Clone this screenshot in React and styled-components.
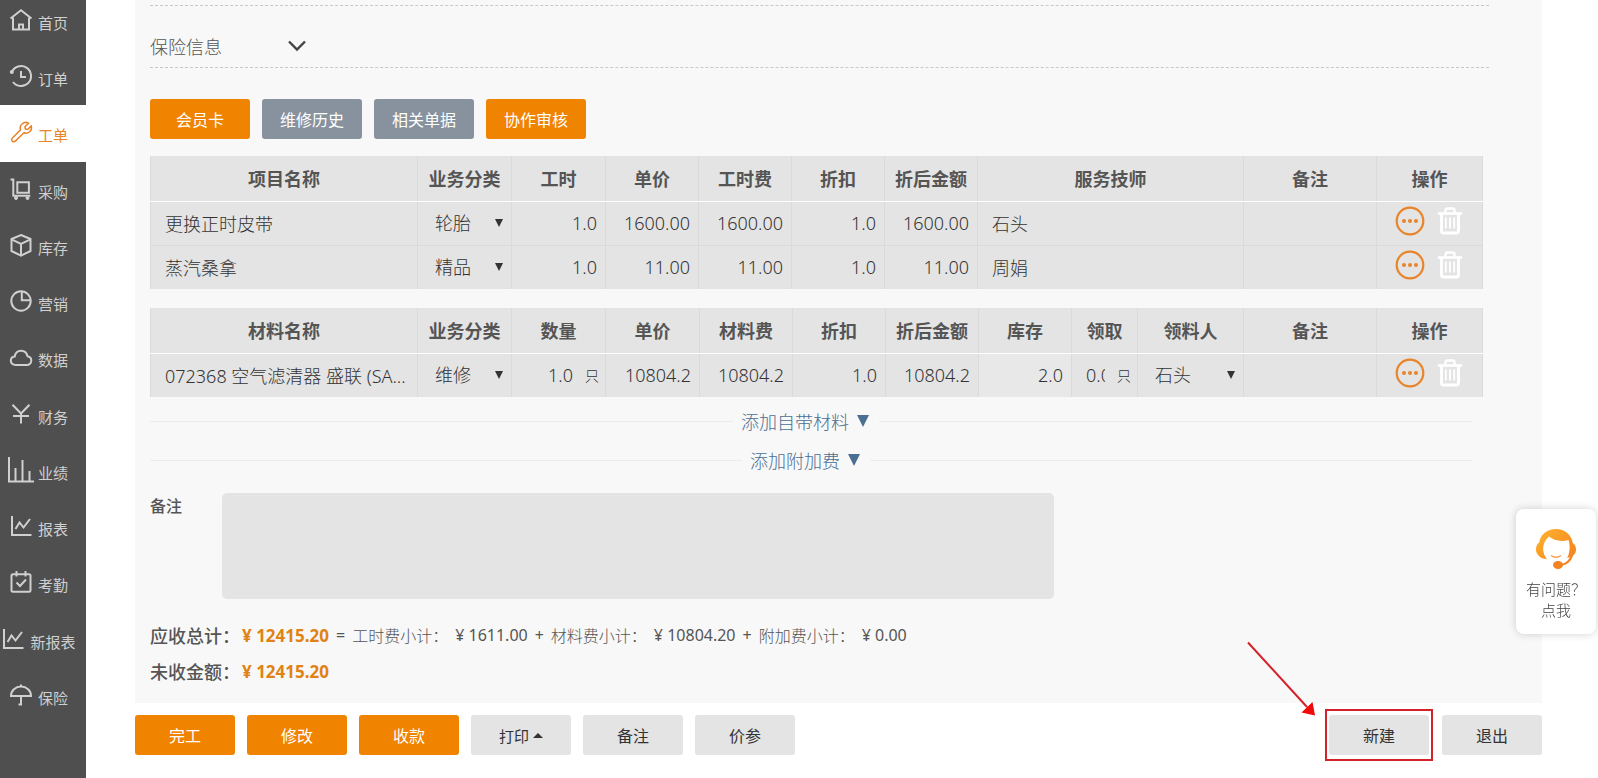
import React from 'react';
import styled, { createGlobalStyle } from 'styled-components';

const fontStack = '"Noto Sans", "Noto Sans CJK SC", sans-serif';

const navItems = [
  { label: '首页', icon: 'home' },
  { label: '订单', icon: 'history' },
  { label: '工单', icon: 'wrench', active: true },
  { label: '采购', icon: 'cart' },
  { label: '库存', icon: 'box' },
  { label: '营销', icon: 'pie' },
  { label: '数据', icon: 'cloud' },
  { label: '财务', icon: 'yen' },
  { label: '业绩', icon: 'bars' },
  { label: '报表', icon: 'trend' },
  { label: '考勤', icon: 'calendar' },
  { label: '新报表', icon: 'trend' },
  { label: '保险', icon: 'umbrella' },
];

const categories = ['轮胎', '精品', '维修'];

const projects = [
  { name: '更换正时皮带', category: '轮胎', hours: '1.0', price: '1600.00', fee: '1600.00', discount: '1.0', total: '1600.00', staff: '石头' },
  { name: '蒸汽桑拿', category: '精品', hours: '1.0', price: '11.00', fee: '11.00', discount: '1.0', total: '11.00', staff: '周娟' },
];

const materials = [
  {
    name: '072368 空气滤清器 盛联 (SA...',
    category: '维修',
    count: '1.0',
    unit: '只',
    price: '10804.2',
    fee: '10804.2',
    discount: '1.0',
    total: '10804.2',
    stock: '2.0',
    taken: '0.0',
    receiver: '石头',
  },
];

const subtotals = [
  { sign: '=', label: '工时费小计：', amount: '¥ 1611.00' },
  { sign: '+', label: '材料费小计：', amount: '¥ 10804.20' },
  { sign: '+', label: '附加费小计：', amount: '¥ 0.00' },
];

const navIcons = {
  home: (
    <>
      <path d="M0.5 9.5 11 1.2l10.5 8.3" />
      <path d="M3 8.5v12h16v-12" />
      <path d="M9 20.5v-5h4v5" />
    </>
  ),
  history: (
    <>
      <path d="M1.8 7.2A10 10 0 1 1 3 17" />
      <circle cx="1.8" cy="7" r="1" fill="currentColor" />
      <path d="M11 6v6h5" />
    </>
  ),
  wrench: (
    <path
      d="M18.6 2.2l-3.7 3.6.5 2.2 2.3.5 3.5-3.6a5.6 5.6 0 0 1-7.4 6.9L5.3 20.1a2.1 2.1 0 0 1-3.3-.3 2.1 2.1 0 0 1 .2-2.6l8.3-8.4a5.6 5.6 0 0 1 8.1-6.6z"
      strokeWidth="1.5"
    />
  ),
  cart: (
    <>
      <path d="M0.5 1.5h2.8v16.3h17" />
      <path d="M7.3 4.2h11.6v10.6H7.3z" />
      <circle cx="6" cy="20" r="1.5" fill="currentColor" strokeWidth="1" />
      <circle cx="17.5" cy="20" r="1.5" fill="currentColor" strokeWidth="1" />
    </>
  ),
  box: (
    <>
      <path d="M11 1l9.5 4v12L11 21.6 1.5 17V5z" />
      <path d="M1.5 5.3 11 9.8l9.5-4.5M11 9.8v11.5" />
    </>
  ),
  pie: (
    <>
      <circle cx="11" cy="11" r="9.7" />
      <path d="M11.8 1.5v8.8h8.7" />
    </>
  ),
  cloud: (
    <path d="M5.5 19C2.8 19 .8 17.2.8 14.8c0-2.3 1.7-3.9 3.9-4.2C5.3 7.2 7.800 4.700 11 4.700s5.800 2.200 6.500 5.500c2.200.4 3.800 2.100 3.800 4.400 0 2.500-2 4.400-4.600 4.400z" />
  ),
  yen: <path d="M2.5 1.8 11 10.5l8.500-8.700M3 13h16M11 10.500v10" />,
  bars: <path d="M-1-2v24.500h25M5.500 22V9M12.500 22V1M19.500 22V12" />,
  trend: <path d="M2 1v19h19.500M5.500 14l4-6.500 4 5L20 4" />,
  calendar: (
    <>
      <rect x="1.5" y="3.2" width="19" height="17.5" rx="1.5" />
      <path d="M6.5 0v5.500M15.500 0v5.500M6.500 11.500l3.500 3.500 6-6.500" />
    </>
  ),
  umbrella: (
    <>
      <path d="M1 12C1 6.500 5.500 2.600 11 2.600S21 6.500 21 12z" />
      <path d="M11 .5v2M11 12v8.500H8.500" />
    </>
  ),
};

function SelectBox({ label, value, options }) {
  return (
    <SelectWrapper>
      <Select aria-label={label} defaultValue={value}>
        {options.map((option) => (
          <option key={option}>{option}</option>
        ))}
      </Select>
      <SelectArrow />
    </SelectWrapper>
  );
}

function RowActions() {
  return (
    <Actions>
      <IconButton type="button" aria-label="更多">
        <svg width="30" height="30" viewBox="0 0 30 30" fill="#e8842a">
          <circle cx="15" cy="15" r="13.3" fill="none" stroke="#e8842a" strokeWidth="2.2" />
          <circle cx="9" cy="15" r="2" />
          <circle cx="15" cy="15" r="2" />
          <circle cx="21" cy="15" r="2" />
        </svg>
      </IconButton>
      <IconButton type="button" aria-label="删除">
        <svg width="24" height="28" viewBox="0 0 24 28" fill="none" stroke="#fff" strokeWidth="1.8">
          <path d="M0 6.5h24" strokeWidth="2.6" />
          <path d="M7.5 5.5v-2q0-2 2-2h5q2 0 2 2v2" strokeWidth="2.4" />
          <path d="M3.500 7v17q0 2 2 2h13q2 0 2-2V7" strokeWidth="2.8" />
          <path d="M7.800 10.500v11M12 10.500v11M16.200 10.500v11" />
        </svg>
      </IconButton>
    </Actions>
  );
}

function Sidebar() {
  return (
    <Nav>
      {navItems.map(({ label, icon, active }) => (
        <NavItem key={label} href="#" $active={active}>
          <NavIcon viewBox="0 0 22 22" aria-hidden="true">
            {navIcons[icon]}
          </NavIcon>
          <NavLabel>{label}</NavLabel>
        </NavItem>
      ))}
    </Nav>
  );
}

function ProjectTable() {
  return (
    <Table>
      <colgroup>
        <Col />
        <Col $width={94} />
        <Col $width={94} />
        <Col $width={93} />
        <Col $width={93} />
        <Col $width={93} />
        <Col $width={93} />
        <Col $width={266} />
        <Col $width={133} />
        <Col $width={106} />
      </colgroup>
      <thead>
        <tr>
          {['项目名称', '业务分类', '工时', '单价', '工时费', '折扣', '折后金额', '服务技师', '备注', '操作'].map((title) => (
            <HeadCell key={title}>{title}</HeadCell>
          ))}
        </tr>
      </thead>
      <tbody>
        {projects.map((row) => (
          <tr key={row.name}>
            <Cell>{row.name}</Cell>
            <Cell $flush>
              <SelectBox label="业务分类" value={row.category} options={categories} />
            </Cell>
            <Cell $number>{row.hours}</Cell>
            <Cell $number>{row.price}</Cell>
            <Cell $number>{row.fee}</Cell>
            <Cell $number>{row.discount}</Cell>
            <Cell $number>{row.total}</Cell>
            <Cell>{row.staff}</Cell>
            <Cell />
            <Cell $flush>
              <RowActions />
            </Cell>
          </tr>
        ))}
      </tbody>
    </Table>
  );
}

function MaterialTable() {
  return (
    <Table>
      <colgroup>
        <Col />
        <Col $width={94} />
        <Col $width={94} />
        <Col $width={94} />
        <Col $width={93} />
        <Col $width={93} />
        <Col $width={93} />
        <Col $width={93} />
        <Col $width={66} />
        <Col $width={106} />
        <Col $width={133} />
        <Col $width={106} />
      </colgroup>
      <thead>
        <tr>
          {['材料名称', '业务分类', '数量', '单价', '材料费', '折扣', '折后金额', '库存', '领取', '领料人', '备注', '操作'].map((title) => (
            <HeadCell key={title}>{title}</HeadCell>
          ))}
        </tr>
      </thead>
      <tbody>
        {materials.map((row) => (
          <tr key={row.name}>
            <Cell>{row.name}</Cell>
            <Cell $flush>
              <SelectBox label="业务分类" value={row.category} options={categories} />
            </Cell>
            <Cell $flush>
              <Quantity>
                <QuantityInput aria-label="数量" defaultValue={row.count} $alignRight />
                <Unit>{row.unit}</Unit>
              </Quantity>
            </Cell>
            <Cell $number>{row.price}</Cell>
            <Cell $number>{row.fee}</Cell>
            <Cell $number>{row.discount}</Cell>
            <Cell $number>{row.total}</Cell>
            <Cell $number $readOnly>{row.stock}</Cell>
            <Cell $flush>
              <Quantity>
                <QuantityInput aria-label="领取" defaultValue={row.taken} />
                <Unit>{row.unit}</Unit>
              </Quantity>
            </Cell>
            <Cell $flush>
              <SelectBox label="领料人" value={row.receiver} options={['石头', '周娟']} />
            </Cell>
            <Cell />
            <Cell $flush>
              <RowActions />
            </Cell>
          </tr>
        ))}
      </tbody>
    </Table>
  );
}

function App() {
  return (
    <>
      <GlobalStyle />
      <Page>
        <Sidebar />
        <Main>
          <Panel>
            <SectionToggle type="button">
              保险信息
              <svg width="18" height="12" viewBox="0 0 18 12" fill="none" stroke="#444" strokeWidth="2.4">
                <path d="M1 1.5l8 8 8-8" />
              </svg>
            </SectionToggle>
            <Toolbar>
              <Button type="button" $variant="primary">会员卡</Button>
              <Button type="button" $variant="slate">维修历史</Button>
              <Button type="button" $variant="slate">相关单据</Button>
              <Button type="button" $variant="primary">协作审核</Button>
            </Toolbar>
            <Tables>
              <ProjectTable />
              <MaterialTable />
            </Tables>
            <AddLinks>
              <AddLine>
                <AddButton type="button">
                  添加自带材料
                  <AddArrow />
                </AddButton>
              </AddLine>
              <AddLine>
                <AddButton type="button">
                  添加附加费
                  <AddArrow />
                </AddButton>
              </AddLine>
            </AddLinks>
            <Remark>
              <RemarkLabel htmlFor="remark">备注</RemarkLabel>
              <RemarkInput id="remark" />
            </Remark>
            <Summary>
              <SummaryRow>
                <SummaryLabel>应收总计：</SummaryLabel>
                <Amount>¥ 12415.20</Amount>
                {subtotals.map(({ sign, label, amount }) => (
                  <React.Fragment key={label}>
                    <span>{sign}</span>
                    <SubtotalLabel>{label}</SubtotalLabel>
                    <span>{amount}</span>
                  </React.Fragment>
                ))}
              </SummaryRow>
              <SummaryRow>
                <SummaryLabel>未收金额：</SummaryLabel>
                <Amount>¥ 12415.20</Amount>
              </SummaryRow>
            </Summary>
          </Panel>
          <Footer>
            <Button type="button" $variant="primary">完工</Button>
            <Button type="button" $variant="primary">修改</Button>
            <Button type="button" $variant="primary">收款</Button>
            <Button type="button" $small>
              打印
              <UpArrow />
            </Button>
            <Button type="button">备注</Button>
            <Button type="button">价参</Button>
            <Highlight>
              <Button type="button">新建</Button>
              <Pointer viewBox="0 0 70 76" aria-hidden="true">
                <path d="M1 1.5 60 66" stroke="#d3222a" strokeWidth="2" />
                <path d="M68 74.5 54.500 71.500 65.500 61z" fill="#f00a0a" />
              </Pointer>
            </Highlight>
            <Button type="button">退出</Button>
          </Footer>
        </Main>
        <HelpCard href="#">
          <svg width="40" height="40" viewBox="0 0 40 40" aria-hidden="true">
            <defs>
              <linearGradient id="hair" x1="0" y1="0" x2="1" y2="1">
                <stop offset="0" stopColor="#ffb52e" />
                <stop offset="1" stopColor="#f47a1c" />
              </linearGradient>
            </defs>
            <path
              fill="url(#hair)"
              d="M20 0C11 0 4.500 5.500 3.200 13.500 1 15 0 17.500 0 20.500c0 4.500 3.500 8 8 9.200l3 .6C7.800 26.500 6.200 20.500 7.700 15.500c.8-2.800 2.400-5.500 5.300-8 4.500 4 12.500 5.500 19.500 3.500 2 6.500 1.300 13-1.300 18l2.800-1c-2 4-5 6.500-8.800 7v1.500C31 36.500 35.500 32 37 26.500c2-1.500 3-3.500 3-6 0-2.800-1.200-5.200-3.200-6.500C35.500 6 29 0 20 0z"
            />
            <path d="M15 26.500q5 3.600 10 0" fill="none" stroke="#f79a4a" strokeWidth="1.5" />
            <ellipse cx="22" cy="36" rx="5" ry="4" fill="#f58220" />
          </svg>
          <span>有问题？</span>
          <span>点我</span>
        </HelpCard>
      </Page>
    </>
  );
}

const GlobalStyle = createGlobalStyle`
  * {
    box-sizing: border-box;
  }

  body {
    margin: 0;
    background: #fff;
    color: #555;
    font-family: ${fontStack};
    font-size: 16px;
    font-weight: 300;
  }

  button, input, select, textarea {
    font-family: inherit;
    font-weight: inherit;
  }
`;

const Page = styled.div`
  display: flex;
  min-height: 100vh;
  overflow: hidden;
`;

const Nav = styled.nav`
  flex: none;
  width: 86px;
  margin-top: -7px;
  background: #4f4f4f;
`;

const NavItem = styled.a`
  display: flex;
  justify-content: center;
  align-items: flex-start;
  gap: 6px;
  height: 56px;
  padding: 16px 8px 0 0;
  background: ${(props) => (props.$active ? '#fff' : 'transparent')};
  color: ${(props) => (props.$active ? '#e8842a' : '#d0d0d0')};
  font-size: 15px;
  font-weight: 400;
  line-height: 24px;
  text-decoration: none;

  &:nth-child(4n + 3) {
    height: 57px;
  }
`;

const NavIcon = styled.svg`
  flex: none;
  width: 22px;
  height: 22px;
  overflow: visible;
  fill: none;
  stroke: currentColor;
  stroke-width: 2;
`;

const NavLabel = styled.span`
  margin-top: 2px;
  white-space: nowrap;
`;

const Main = styled.main`
  flex: 1;
  min-width: 0;
  padding: 0 56px 22px 49px;
`;

const Panel = styled.section`
  padding: 5px 53px 20px 15px;
  background: #f8f8f8;
`;

const SectionToggle = styled.button`
  display: flex;
  align-items: center;
  gap: 66px;
  width: 100%;
  height: 63px;
  padding: 18px 0 0;
  border: dashed #c8c8c8;
  border-width: 1px 0;
  background: none;
  color: #555;
  font-size: 18px;
`;

const Toolbar = styled.div`
  display: flex;
  gap: 12px;
  padding: 31px 0 17px;
`;

const buttonColors = {
  primary: '#f08300',
  slate: '#87929e',
  plain: '#e4e4e4',
};

const Button = styled.button`
  display: flex;
  justify-content: center;
  align-items: center;
  gap: 4px;
  width: 100px;
  height: 40px;
  padding: 0;
  border: none;
  border-radius: 3px;
  background: ${(props) => buttonColors[props.$variant || 'plain']};
  color: ${(props) => (props.$variant ? '#fff' : '#333')};
  font-size: ${(props) => (props.$small ? '15px' : '16px')};
  font-weight: 400;
`;

const Tables = styled.div`
  display: grid;
  gap: 19px;
  padding-right: 6px;
`;

const Table = styled.table`
  width: 100%;
  table-layout: fixed;
  border-collapse: collapse;
  background: #e4e4e4;
  font-size: 18px;
`;

const Col = styled.col`
  width: ${(props) => (props.$width ? `${props.$width}px` : 'auto')};
`;

const HeadCell = styled.th`
  height: 45px;
  padding: 0;
  border: solid #dadada;
  border-width: 0 1px;
  border-bottom: 1px solid #fff;
  font-weight: 700;
`;

const Cell = styled.td`
  height: 44px;
  padding: ${(props) => (props.$flush ? '0' : '0 8px 0 14px')};
  border: 1px solid #dadada;
  border-bottom: 0;
  background: ${(props) => (props.$readOnly ? '#e8e8e8' : 'transparent')};
  color: #333;
  text-align: ${(props) => (props.$number ? 'right' : 'left')};
  white-space: nowrap;
  overflow: hidden;

  tr:first-child > & {
    border-top-color: #fff;
  }
`;

const SelectWrapper = styled.div`
  display: flex;
  align-items: center;
  padding: 0 8px 0 17px;
`;

const Select = styled.select`
  flex: 1;
  min-width: 0;
  padding: 0;
  border: none;
  appearance: none;
  background: none;
  color: #333;
  font-size: 18px;
`;

const SelectArrow = styled.span`
  border: solid transparent;
  border-width: 8px 4px 0;
  border-top-color: #333;
`;

const Quantity = styled.label`
  display: flex;
  align-items: center;
  gap: 12px;
  padding: 0 6px 0 14px;
`;

const QuantityInput = styled.input`
  flex: 1;
  width: 0;
  min-width: 0;
  padding: 0;
  border: none;
  background: none;
  color: #333;
  font-size: 18px;
  text-align: ${(props) => (props.$alignRight ? 'right' : 'left')};
`;

const Unit = styled.span`
  font-size: 14px;
`;

const Actions = styled.div`
  display: flex;
  align-items: center;
  gap: 13px;
  padding: 0 0 4px 18px;
`;

const IconButton = styled.button`
  display: flex;
  padding: 0;
  border: none;
  background: none;
`;

const AddLinks = styled.div`
  display: grid;
  gap: 11px;
  padding: 10px 17px 0 0;
`;

const AddLine = styled.div`
  display: flex;
  align-items: center;

  &::before,
  &::after {
    content: '';
    flex: 1;
    border-top: 1px solid #ebebeb;
  }

  &::after {
    flex-basis: 10px;
  }
`;

const AddButton = styled.button`
  display: flex;
  align-items: center;
  gap: 8px;
  height: 28px;
  padding: 0 10px 0 8px;
  border: none;
  background: none;
  color: #4a6f92;
  font-size: 18px;
`;

const AddArrow = styled.span`
  border: solid transparent;
  border-width: 12px 6px 0;
  border-top-color: #4a6f92;
`;

const Remark = styled.div`
  display: flex;
  padding-top: 19px;
`;

const RemarkLabel = styled.label`
  flex: none;
  width: 72px;
  font-weight: 500;
`;

const RemarkInput = styled.textarea`
  flex: 0 1 832px;
  height: 106px;
  border: none;
  border-radius: 5px;
  background: #e4e4e4;
  resize: none;
`;

const Summary = styled.div`
  display: grid;
  gap: 12px;
  padding-top: 24px;
`;

const SummaryRow = styled.div`
  display: flex;
  align-items: center;
  gap: 7px;
  height: 24px;
  font-weight: 400;
  white-space: nowrap;
`;

const SummaryLabel = styled.span`
  width: 85px;
  font-size: 18px;
  font-weight: 500;
`;

const SubtotalLabel = styled.span`
  font-weight: 300;
`;

const Amount = styled.strong`
  color: #e08214;
  font-size: 17px;
  font-weight: 700;
`;

const Footer = styled.footer`
  display: flex;
  align-items: center;
  gap: 12px;
  padding-top: 10px;
`;

const UpArrow = styled.span`
  border: solid transparent;
  border-width: 0 5px 5px;
  border-bottom-color: #333;
`;

const Highlight = styled.div`
  position: relative;
  margin: 0 1px 0 auto;
  padding: 2px 0;
  outline: 2px solid #d3222a;
  outline-offset: 2px;
`;

const Pointer = styled.svg`
  position: absolute;
  right: 112px;
  bottom: 40px;
  width: 70px;
  height: 76px;
`;

const HelpCard = styled.a`
  position: fixed;
  right: 2px;
  bottom: 144px;
  display: flex;
  flex-direction: column;
  align-items: center;
  width: 80px;
  height: 125px;
  padding-top: 20px;
  border-radius: 8px;
  background: #fff;
  box-shadow: 0 0 8px rgba(0, 0, 0, 0.18);
  color: #444;
  font-size: 15px;
  line-height: 21px;
  text-decoration: none;

  svg {
    margin-bottom: 10px;
  }
`;

export default App;
